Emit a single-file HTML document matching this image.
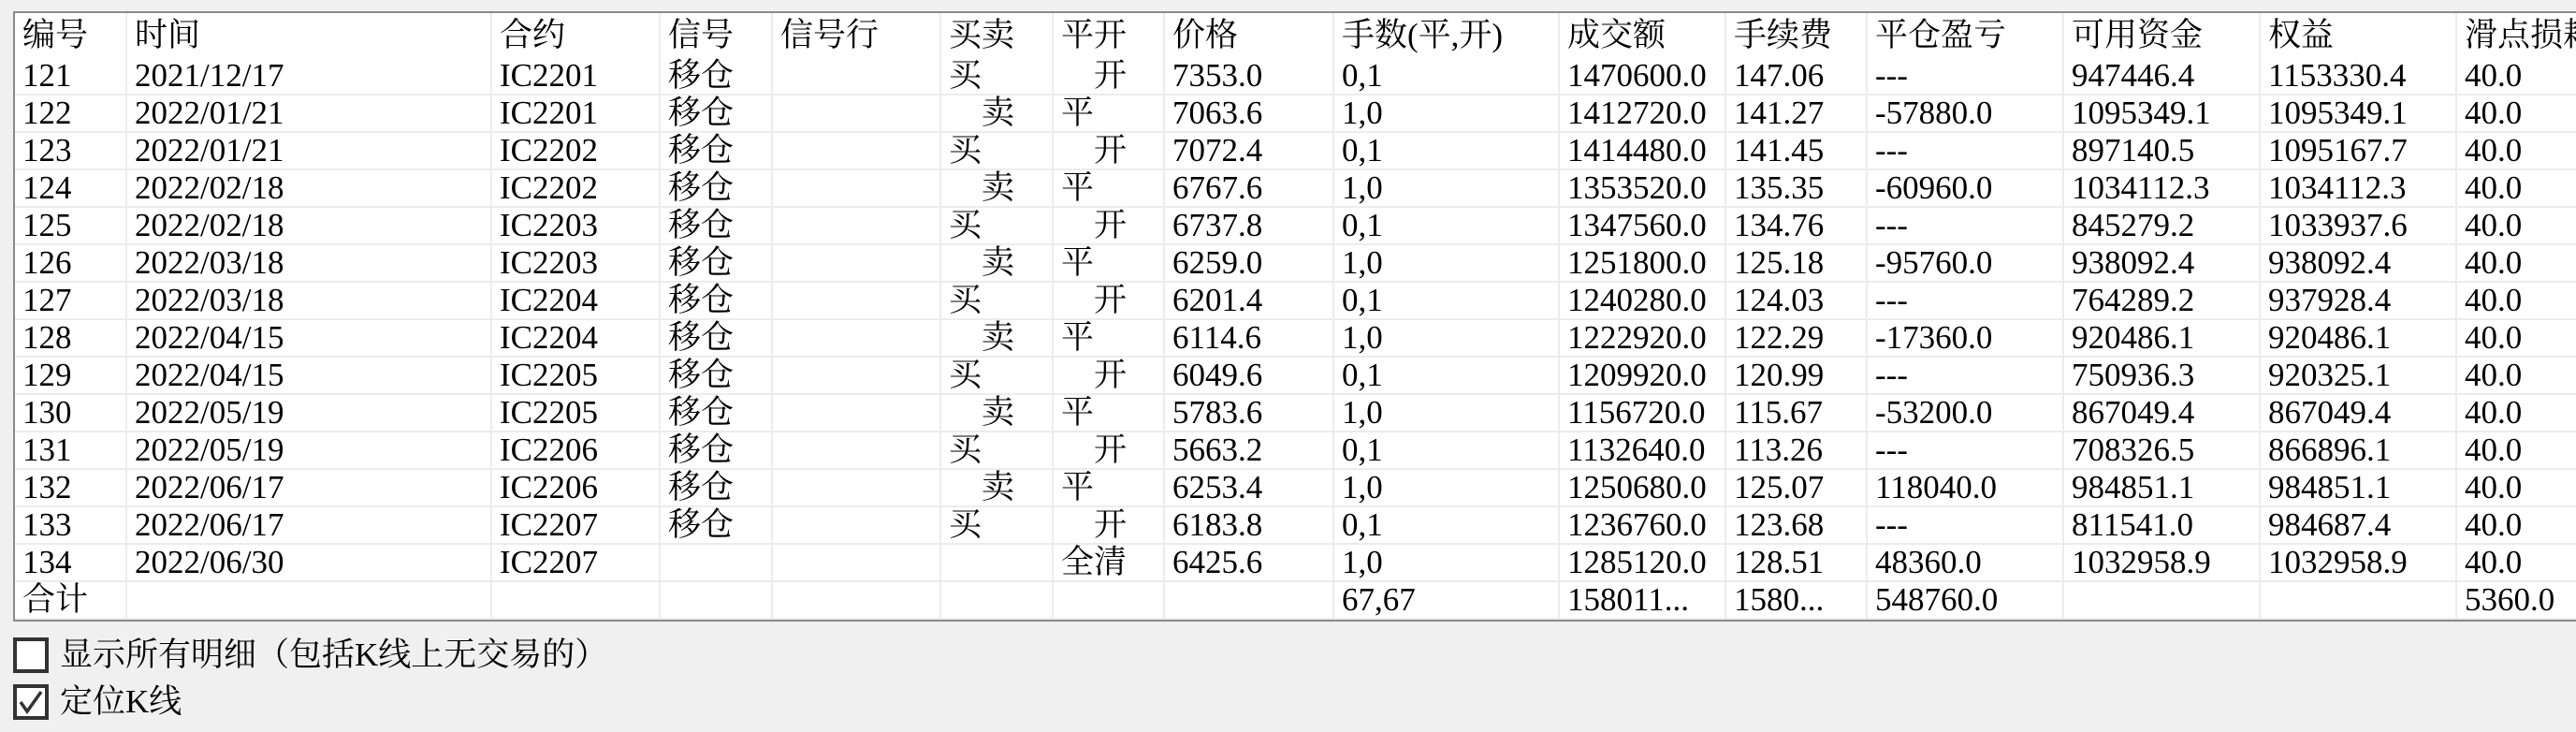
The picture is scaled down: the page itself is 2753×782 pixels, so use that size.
<!DOCTYPE html>
<html><head><meta charset="utf-8">
<style>
html,body{margin:0;padding:0;background:#f0f0f0;width:2753px;height:782px;overflow:hidden}
body{font-family:"Liberation Serif","Noto Serif CJK SC",serif;font-size:35px;color:#000;position:relative}
.tbl{position:absolute;left:14px;top:12px;width:2800px;height:652px;background:#fff;border-top:2px solid #8a8a8a;border-left:2px solid #8a8a8a;border-bottom:2px solid #8a8a8a;box-sizing:border-box;overflow:hidden}
table{border-collapse:collapse;table-layout:fixed;position:absolute;left:0;top:0}
td{padding:0;white-space:nowrap;overflow:hidden;border-right:2px solid #ececec;border-bottom:2px solid #ececec;box-sizing:border-box;vertical-align:top}
td div{height:38px;line-height:38px;padding-left:8px;overflow:hidden}
tr.h td{border-bottom:none}
tr.h td div{height:48px;line-height:48px}
.cb{position:absolute;left:14px;width:38px;height:38px;box-sizing:border-box;border:4px solid #333;background:#fff}
.lbl{position:absolute;left:64px;height:40px;line-height:40px;white-space:nowrap}
</style></head><body>
<div class="tbl">
<table>
<colgroup><col style="width:119px"><col style="width:390px"><col style="width:180px"><col style="width:120px"><col style="width:180px"><col style="width:120px"><col style="width:119px"><col style="width:181px"><col style="width:241px"><col style="width:178px"><col style="width:151px"><col style="width:210px"><col style="width:210px"><col style="width:210px"><col style="width:175px"></colgroup>
<tr class="h"><td><div>编号</div></td><td><div>时间</div></td><td><div>合约</div></td><td><div>信号</div></td><td><div>信号行</div></td><td><div>买卖</div></td><td><div>平开</div></td><td><div>价格</div></td><td><div>手数(平,开)</div></td><td><div>成交额</div></td><td><div>手续费</div></td><td><div>平仓盈亏</div></td><td><div>可用资金</div></td><td><div>权益</div></td><td><div>滑点损耗</div></td></tr>
<tr><td><div>121</div></td><td><div>2021/12/17</div></td><td><div>IC2201</div></td><td><div>移仓</div></td><td><div></div></td><td><div>买　</div></td><td><div>　开</div></td><td><div>7353.0</div></td><td><div>0,1</div></td><td><div>1470600.0</div></td><td><div>147.06</div></td><td><div>---</div></td><td><div>947446.4</div></td><td><div>1153330.4</div></td><td><div>40.0</div></td></tr>
<tr><td><div>122</div></td><td><div>2022/01/21</div></td><td><div>IC2201</div></td><td><div>移仓</div></td><td><div></div></td><td><div>　卖</div></td><td><div>平　</div></td><td><div>7063.6</div></td><td><div>1,0</div></td><td><div>1412720.0</div></td><td><div>141.27</div></td><td><div>-57880.0</div></td><td><div>1095349.1</div></td><td><div>1095349.1</div></td><td><div>40.0</div></td></tr>
<tr><td><div>123</div></td><td><div>2022/01/21</div></td><td><div>IC2202</div></td><td><div>移仓</div></td><td><div></div></td><td><div>买　</div></td><td><div>　开</div></td><td><div>7072.4</div></td><td><div>0,1</div></td><td><div>1414480.0</div></td><td><div>141.45</div></td><td><div>---</div></td><td><div>897140.5</div></td><td><div>1095167.7</div></td><td><div>40.0</div></td></tr>
<tr><td><div>124</div></td><td><div>2022/02/18</div></td><td><div>IC2202</div></td><td><div>移仓</div></td><td><div></div></td><td><div>　卖</div></td><td><div>平　</div></td><td><div>6767.6</div></td><td><div>1,0</div></td><td><div>1353520.0</div></td><td><div>135.35</div></td><td><div>-60960.0</div></td><td><div>1034112.3</div></td><td><div>1034112.3</div></td><td><div>40.0</div></td></tr>
<tr><td><div>125</div></td><td><div>2022/02/18</div></td><td><div>IC2203</div></td><td><div>移仓</div></td><td><div></div></td><td><div>买　</div></td><td><div>　开</div></td><td><div>6737.8</div></td><td><div>0,1</div></td><td><div>1347560.0</div></td><td><div>134.76</div></td><td><div>---</div></td><td><div>845279.2</div></td><td><div>1033937.6</div></td><td><div>40.0</div></td></tr>
<tr><td><div>126</div></td><td><div>2022/03/18</div></td><td><div>IC2203</div></td><td><div>移仓</div></td><td><div></div></td><td><div>　卖</div></td><td><div>平　</div></td><td><div>6259.0</div></td><td><div>1,0</div></td><td><div>1251800.0</div></td><td><div>125.18</div></td><td><div>-95760.0</div></td><td><div>938092.4</div></td><td><div>938092.4</div></td><td><div>40.0</div></td></tr>
<tr><td><div>127</div></td><td><div>2022/03/18</div></td><td><div>IC2204</div></td><td><div>移仓</div></td><td><div></div></td><td><div>买　</div></td><td><div>　开</div></td><td><div>6201.4</div></td><td><div>0,1</div></td><td><div>1240280.0</div></td><td><div>124.03</div></td><td><div>---</div></td><td><div>764289.2</div></td><td><div>937928.4</div></td><td><div>40.0</div></td></tr>
<tr><td><div>128</div></td><td><div>2022/04/15</div></td><td><div>IC2204</div></td><td><div>移仓</div></td><td><div></div></td><td><div>　卖</div></td><td><div>平　</div></td><td><div>6114.6</div></td><td><div>1,0</div></td><td><div>1222920.0</div></td><td><div>122.29</div></td><td><div>-17360.0</div></td><td><div>920486.1</div></td><td><div>920486.1</div></td><td><div>40.0</div></td></tr>
<tr><td><div>129</div></td><td><div>2022/04/15</div></td><td><div>IC2205</div></td><td><div>移仓</div></td><td><div></div></td><td><div>买　</div></td><td><div>　开</div></td><td><div>6049.6</div></td><td><div>0,1</div></td><td><div>1209920.0</div></td><td><div>120.99</div></td><td><div>---</div></td><td><div>750936.3</div></td><td><div>920325.1</div></td><td><div>40.0</div></td></tr>
<tr><td><div>130</div></td><td><div>2022/05/19</div></td><td><div>IC2205</div></td><td><div>移仓</div></td><td><div></div></td><td><div>　卖</div></td><td><div>平　</div></td><td><div>5783.6</div></td><td><div>1,0</div></td><td><div>1156720.0</div></td><td><div>115.67</div></td><td><div>-53200.0</div></td><td><div>867049.4</div></td><td><div>867049.4</div></td><td><div>40.0</div></td></tr>
<tr><td><div>131</div></td><td><div>2022/05/19</div></td><td><div>IC2206</div></td><td><div>移仓</div></td><td><div></div></td><td><div>买　</div></td><td><div>　开</div></td><td><div>5663.2</div></td><td><div>0,1</div></td><td><div>1132640.0</div></td><td><div>113.26</div></td><td><div>---</div></td><td><div>708326.5</div></td><td><div>866896.1</div></td><td><div>40.0</div></td></tr>
<tr><td><div>132</div></td><td><div>2022/06/17</div></td><td><div>IC2206</div></td><td><div>移仓</div></td><td><div></div></td><td><div>　卖</div></td><td><div>平　</div></td><td><div>6253.4</div></td><td><div>1,0</div></td><td><div>1250680.0</div></td><td><div>125.07</div></td><td><div>118040.0</div></td><td><div>984851.1</div></td><td><div>984851.1</div></td><td><div>40.0</div></td></tr>
<tr><td><div>133</div></td><td><div>2022/06/17</div></td><td><div>IC2207</div></td><td><div>移仓</div></td><td><div></div></td><td><div>买　</div></td><td><div>　开</div></td><td><div>6183.8</div></td><td><div>0,1</div></td><td><div>1236760.0</div></td><td><div>123.68</div></td><td><div>---</div></td><td><div>811541.0</div></td><td><div>984687.4</div></td><td><div>40.0</div></td></tr>
<tr><td><div>134</div></td><td><div>2022/06/30</div></td><td><div>IC2207</div></td><td><div></div></td><td><div></div></td><td><div></div></td><td><div>全清</div></td><td><div>6425.6</div></td><td><div>1,0</div></td><td><div>1285120.0</div></td><td><div>128.51</div></td><td><div>48360.0</div></td><td><div>1032958.9</div></td><td><div>1032958.9</div></td><td><div>40.0</div></td></tr>
<tr><td><div>合计</div></td><td><div></div></td><td><div></div></td><td><div></div></td><td><div></div></td><td><div></div></td><td><div></div></td><td><div></div></td><td><div>67,67</div></td><td><div>158011...</div></td><td><div>1580...</div></td><td><div>548760.0</div></td><td><div></div></td><td><div></div></td><td><div>5360.0</div></td></tr>
</table>
</div>
<div class="cb" style="top:681px"></div>
<div class="lbl" style="top:680px">显示所有明细（包括K线上无交易的）</div>
<div class="cb" style="top:731px"><svg width="30" height="30" viewBox="0 0 30 30" style="position:absolute;left:0;top:0"><path d="M4 15 L11 25 L26 4" fill="none" stroke="#333" stroke-width="3.5"/></svg></div>
<div class="lbl" style="top:730px">定位K线</div>
</body></html>
